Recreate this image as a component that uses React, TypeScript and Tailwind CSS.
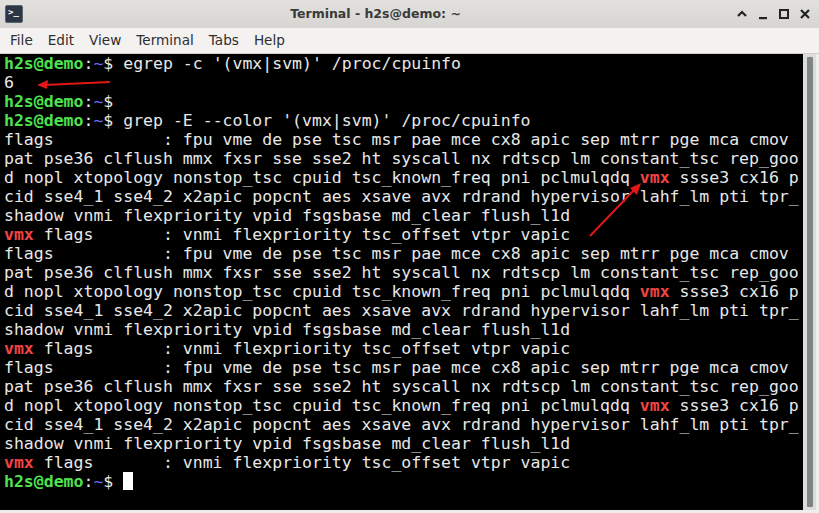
import React from "react";

type Seg = { t: string; c?: string };

const W = "text-[#e8e8e8]";
const prompt: Seg[] = [
  { t: "h2s@demo", c: "text-[#4fe24f] font-bold" },
  { t: ":", c: W },
  { t: "~", c: "text-[#6b6bff]" },
  { t: "$ ", c: W },
];
const vmx = { t: "vmx", c: "text-[#f04545] font-bold" };

const block: Seg[][] = [
  [{ t: "flags           : fpu vme de pse tsc msr pae mce cx8 apic sep mtrr pge mca cmov" }],
  [{ t: "pat pse36 clflush mmx fxsr sse sse2 ht syscall nx rdtscp lm constant_tsc rep_goo" }],
  [{ t: "d nopl xtopology nonstop_tsc cpuid tsc_known_freq pni pclmulqdq " }, vmx, { t: " ssse3 cx16 p" }],
  [{ t: "cid sse4_1 sse4_2 x2apic popcnt aes xsave avx rdrand hypervisor lahf_lm pti tpr_" }],
  [{ t: "shadow vnmi flexpriority vpid fsgsbase md_clear flush_l1d" }],
  [vmx, { t: " flags       : vnmi flexpriority tsc_offset vtpr vapic" }],
];

const lines: Seg[][] = [
  [...prompt, { t: "egrep -c '(vmx|svm)' /proc/cpuinfo" }],
  [{ t: "6" }],
  [...prompt],
  [...prompt, { t: "grep -E --color '(vmx|svm)' /proc/cpuinfo" }],
  ...block,
  ...block,
  ...block,
];

const menus = ["File", "Edit", "View", "Terminal", "Tabs", "Help"];

export default function App() {
  return (
    <div className="w-[819px] h-[513px] bg-[#efeeec] flex flex-col font-['DejaVu_Sans',sans-serif] overflow-hidden">
      {/* title bar */}
      <div className="h-[28px] flex items-center px-[5px] bg-gradient-to-b from-[#e2e1de] to-[#d6d5d2]">
        <div className="w-[18px] h-[18px] bg-[#2c3644] rounded-[2px] border border-[#5a6370] flex items-start pl-[2px] pt-[1px]">
          <span className="text-white text-[9px] font-bold leading-[10px] font-['DejaVu_Sans_Mono',monospace]">&gt;_</span>
        </div>
        <div className="flex-1 text-center text-[12.5px] font-bold text-[#3a3a3a] pr-[8px]">Terminal - h2s@demo: ~</div>
        <div className="flex items-center gap-[9px] pr-[3px]">
          <svg width="12" height="12" viewBox="0 0 12 12"><path d="M2 8 L6 4 L10 8" stroke="#222" strokeWidth="2.2" fill="none" /></svg>
          <svg width="12" height="12" viewBox="0 0 12 12"><rect x="2" y="9" width="8" height="2.2" fill="#222" /></svg>
          <svg width="12" height="12" viewBox="0 0 12 12"><rect x="2" y="2" width="8" height="8" stroke="#222" strokeWidth="2" fill="none" /></svg>
          <svg width="12" height="12" viewBox="0 0 12 12"><path d="M2 2 L10 10 M10 2 L2 10" stroke="#222" strokeWidth="2.2" /></svg>
        </div>
      </div>
      {/* menu bar */}
      <div className="h-[25px] flex items-center gap-[15px] px-[10px] bg-[#f3f2f1] text-[13.6px] text-[#2e2e2e]">
        {menus.map((m) => (
          <span key={m}>{m}</span>
        ))}
      </div>
      {/* body */}
      <div className="flex flex-1 border-t border-[#d0cfcc]">
        <div className="flex-1 bg-black relative pl-[4px] font-['DejaVu_Sans_Mono',monospace] text-[16.5px] leading-[19px] whitespace-pre">
          {lines.map((l, i) => (
            <div key={i} className={W}>
              {l.map((s, j) => (
                <span key={j} className={s.c}>{s.t}</span>
              ))}
            </div>
          ))}
          <div className={W}>
            {prompt.map((s, j) => (
              <span key={j} className={s.c}>{s.t}</span>
            ))}
            <span className="inline-block w-[10px] h-[18px] bg-white align-[-3px]" />
          </div>
          <svg className="absolute left-0 top-0" width="803" height="460">
            <line x1="110" y1="28" x2="44" y2="31" stroke="#e01818" strokeWidth="2" />
            <path d="M37 31 L48 26 L47 35 Z" fill="#e01818" />
            <line x1="590" y1="182" x2="636" y2="134" stroke="#e01818" strokeWidth="2" />
            <path d="M641 129 L630 134 L637 141 Z" fill="#e01818" />
          </svg>
        </div>
        <div className="w-[13px] bg-[#dcdcdc] flex justify-center py-[3px]">
          <div className="w-[6px] h-full bg-[#7f8484] rounded-[1px]" />
        </div>
        <div className="w-[3px] bg-[#efeeec]" />
      </div>
      <div className="h-[3px] bg-[#efeeec]" />
    </div>
  );
}
